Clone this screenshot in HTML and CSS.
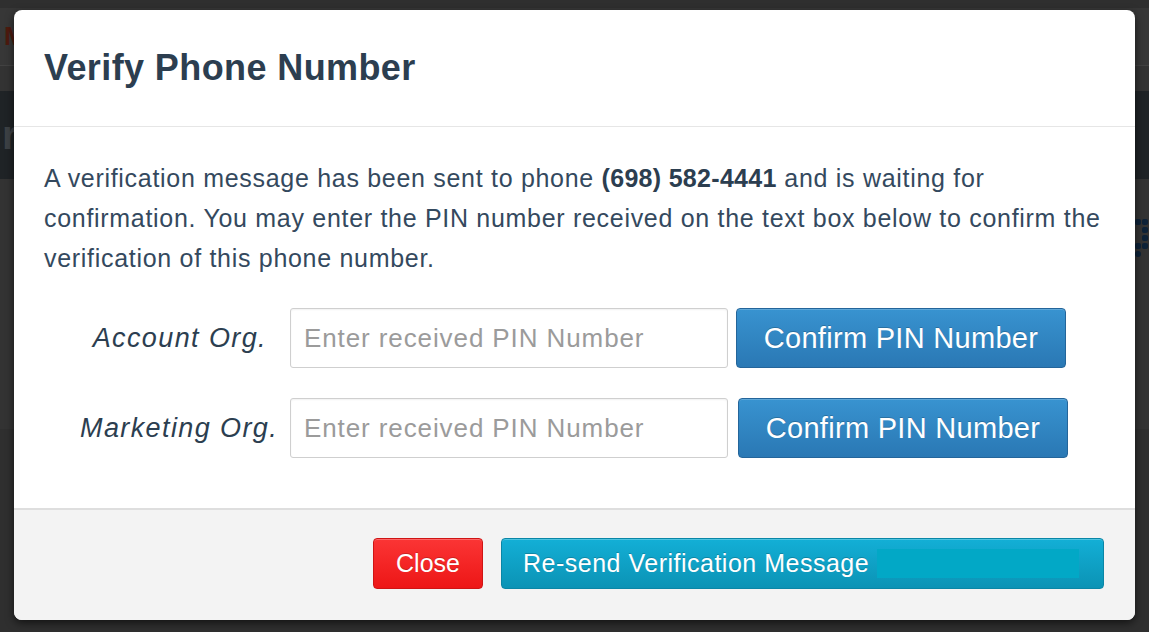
FILE: index.html
```html
<!DOCTYPE html>
<html lang="en">
<head>
  <meta charset="UTF-8">
  <title>Verify Phone Number</title>
  <meta name="viewport" content="width=device-width, initial-scale=1.0">
  <link rel="stylesheet" href="styles.css">
</head>
<body>
  <div class="pagina">
    <div class="barra-top"><span class="logo">M</span></div>
    <div class="separador"></div>
    <div class="banda"><span class="banda-texto">r</span></div>
    <div class="contenido">
      <svg class="puntos" width="16" height="48" viewBox="0 0 16 48">
        <rect x="2" y="0" width="6" height="6" rx="2" fill="#0d2238"/>
        <rect x="9" y="0" width="6" height="6" rx="2" fill="#0d2238"/>
        <rect x="9" y="8" width="6" height="6" rx="2" fill="#0d2238"/>
        <rect x="9" y="16" width="6" height="6" rx="2" fill="#0d2238"/>
        <rect x="2" y="24" width="6" height="6" rx="2" fill="#0d2238"/>
        <rect x="9" y="24" width="6" height="6" rx="2" fill="#0d2238"/>
        <rect x="2" y="32" width="6" height="6" rx="3" fill="#0d2238"/>
      </svg>
    </div>
  </div>

  <div class="modal">
    <div class="modal-header">
      <h2>Verify Phone Number</h2>
    </div>

    <div class="modal-body">
      <p class="mensaje">A verification message has been sent to phone <strong>(698) 582-4441</strong> and is waiting for confirmation. You may enter the PIN number received on the text box below to confirm the verification of this phone number.</p>

      <div class="pin-form">
        <div class="pin-row">
          <label>Account Org.</label>
          <input type="text" placeholder="Enter received PIN Number">
          <button class="btn btn-azul">Confirm PIN Number</button>
        </div>
        <div class="pin-row">
          <label>Marketing Org.</label>
          <input type="text" placeholder="Enter received PIN Number">
          <button class="btn btn-azul">Confirm PIN Number</button>
        </div>
      </div>
    </div>

    <div class="modal-footer">
      <button class="btn btn-rojo">Close</button>
      <button class="btn btn-cian">Re-send Verification Message<span class="resalte"></span></button>
    </div>
  </div>
</body>
</html>
```

FILE: styles.css
```css
body {
  margin: 0;
  background: #2f2f2f;
  font-family: "Liberation Sans", Arial, sans-serif;
  color: #2c3e50;
  height: 632px;
  overflow: hidden;
}

/* pagina de fondo, oscurecida detras del modal */
.pagina {
  height: 632px;
}
.barra-top {
  height: 57px;
  margin-top: 8px;
  background: #373737;
}
.logo {
  display: block;
  padding: 14px 0 0 4px;
  font-size: 26px;
  font-weight: bold;
  color: #4e1a0e;
  line-height: 28px;
}
.separador {
  height: 25px;
  background: #333;
  border-top: 1px solid #424242;
}
.banda {
  height: 88px;
  background: #1f2326;
}
.banda-texto {
  display: block;
  padding: 22px 0 0 2px;
  font-size: 40px;
  font-weight: bold;
  color: #3d4145;
}
.contenido {
  height: 210px;
  background: #333;
  display: flex;
  justify-content: flex-end;
  padding-top: 40px;
}

/* modal */
.modal {
  position: absolute;
  top: 10px;
  left: 14px;
  width: 1121px;
  background: #fff;
  border-radius: 8px;
  box-shadow: 0 3px 9px rgba(0,0,0,0.6);
  overflow: hidden;
}
.modal-header {
  padding: 38px 30px;
  border-bottom: 1px solid #e6e6e6;
}
.modal-header h2 {
  margin: 0;
  font-size: 36px;
  line-height: 40px;
  letter-spacing: 0.4px;
  font-weight: bold;
  color: #2c3e50;
}
.modal-body {
  padding: 31px 30px 50px;
}
.mensaje {
  margin: 0;
  font-size: 25px;
  line-height: 40px;
  letter-spacing: 0.7px;
  color: #34495e;
}
.mensaje strong {
  color: #2c3e50;
  letter-spacing: 0.3px;
}
.pin-form {
  margin-top: 30px;
  padding-left: 36px;
  display: flex;
  flex-direction: column;
  gap: 30px;
}
.pin-row {
  display: flex;
  align-items: center;
}
.pin-row label {
  width: 187px;
  margin-right: 23px;
  text-align: right;
  white-space: nowrap;
  font-style: italic;
  font-size: 27px;
  letter-spacing: 1.4px;
  color: #2c3e50;
}
.pin-row input {
  box-sizing: border-box;
  width: 438px;
  height: 60px;
  padding: 0 13px;
  border: 1px solid #cfcfcf;
  border-radius: 3px;
  box-shadow: inset 0 1px 2px rgba(0,0,0,0.06);
  font-family: inherit;
  font-size: 26px;
  letter-spacing: 0.9px;
  color: #333;
}
.pin-row input::placeholder {
  color: #9b9b9b;
}

/* botones */
.btn {
  box-sizing: border-box;
  font-family: inherit;
  color: #fff;
  border-radius: 4px;
  cursor: pointer;
  text-shadow: 0 -1px 0 rgba(0,0,0,0.2);
}
.btn-azul {
  margin-left: 8px;
  width: 330px;
  height: 60px;
  font-size: 29px;
  letter-spacing: 0.3px;
  background: linear-gradient(#3893d0, #2a78b4);
  border: 1px solid #24659a;
  box-shadow: inset 0 1px 0 rgba(255,255,255,0.2);
}
.pin-row + .pin-row .btn-azul {
  margin-left: 10px;
}

.modal-footer {
  background: #f3f3f3;
  border-top: 2px solid #dedede;
  padding: 28px 31px 31px;
  display: flex;
  justify-content: flex-end;
  gap: 18px;
}
.btn-rojo {
  width: 110px;
  height: 51px;
  font-size: 25px;
  background: linear-gradient(#fb3535, #ed1616);
  border: 1px solid #cf1414;
  box-shadow: inset 0 1px 0 rgba(255,255,255,0.25);
}
.btn-cian {
  width: 603px;
  height: 51px;
  font-size: 25px;
  letter-spacing: 0.5px;
  text-align: left;
  padding: 0 0 0 21px;
  display: flex;
  align-items: center;
  background: linear-gradient(#13afd6, #0b93b5);
  border: 1px solid #0a86a6;
  box-shadow: inset 0 1px 0 rgba(255,255,255,0.25);
}
.resalte {
  display: inline-block;
  margin-left: 8px;
  width: 202px;
  height: 29px;
  background: #02a8c6;
}
```
